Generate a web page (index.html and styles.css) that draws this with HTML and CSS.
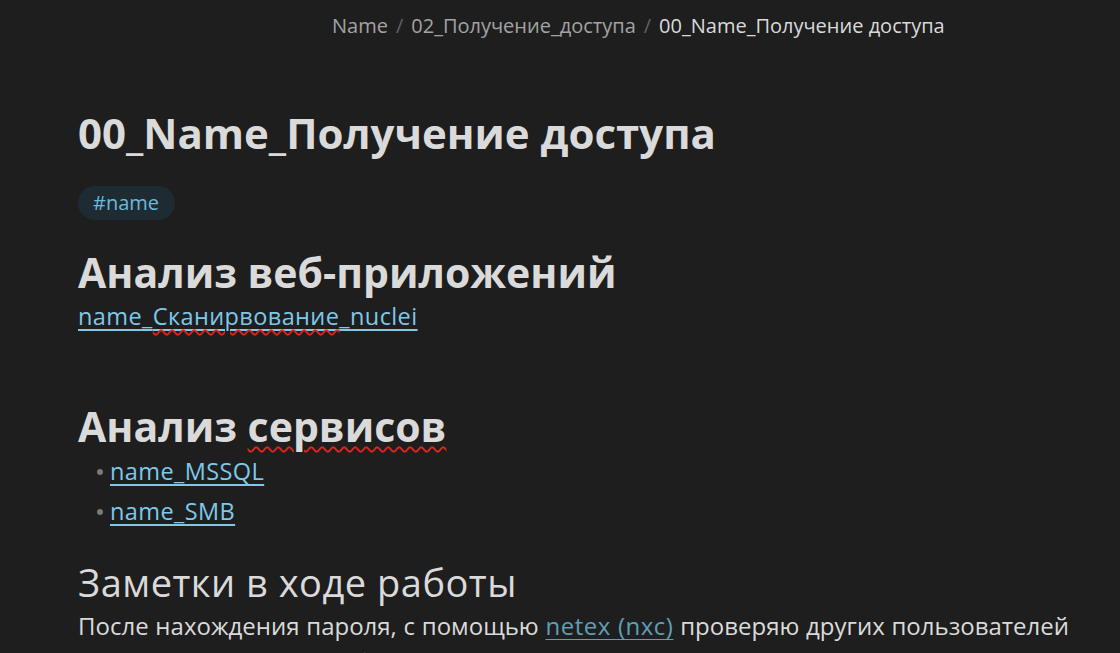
FILE: index.html
```html
<!DOCTYPE html>
<html lang="ru">
<head>
<meta charset="utf-8">
<title>00_Name_Получение доступа</title>
<link rel="stylesheet" href="styles.css">
</head>
<body>
<div class="app">
  <nav class="crumbs">
    <span class="crumb">Name</span>
    <span class="sep">/</span>
    <span class="crumb">02_Получение_доступа</span>
    <span class="sep">/</span>
    <span class="crumb current">00_Name_Получение доступа</span>
  </nav>
  <main class="note">
    <h1 class="title">00_Name_Получение доступа</h1>
    <div class="tags"><span class="tag">#name</span></div>
    <h2 class="h2">Анализ веб-приложений</h2>
    <p class="line"><a class="ilink" href="#">name_<span class="spell">Сканирвование</span>_nuclei</a></p>
    <h2 class="h2 second">Анализ <span class="spell">сервисов</span></h2>
    <ul class="list">
      <li><a class="ilink" href="#">name_MSSQL</a></li>
      <li><a class="ilink" href="#">name_SMB</a></li>
    </ul>
    <h3 class="h3">Заметки в ходе работы</h3>
    <p class="para">После нахождения пароля, с помощью <a class="elink" href="#">netex (nxc)</a> проверяю других пользователей на наличие доступа к общим ресурсам и сервисам</p>
  </main>
</div>
</body>
</html>
```
FILE: styles.css
```css
html, body {
  margin: 0;
  padding: 0;
  background: #1e1e1e;
  height: 100%;
  overflow: hidden;
}
.app {
  font-family: "Open Sans", "Noto Sans", sans-serif;
  color: #dadada;
}
.crumbs {
  display: flex;
  align-items: center;
  gap: 8px;
  padding: 12px 0 0 332px;
  font-size: 20px;
  line-height: 28px;
  color: #a3a3a3;
  white-space: nowrap;
}
.crumbs .sep { color: #616161; }
.crumbs .current { color: #dadada; }
.note {
  padding: 0 0 0 78px;
  width: 1000px;
}
.title {
  margin: 68px 0 0;
  font-size: 42px;
  line-height: 50px;
  font-weight: 700;
  color: #dadada;
}
.tags {
  margin-top: 28px;
  display: flex;
}
.tag {
  background: #1f2b33;
  color: #6cb9dd;
  font-size: 20px;
  line-height: 34px;
  padding: 0 16px 0 15px;
  border-radius: 17px;
}
.h2 {
  margin: 28px 0 0;
  font-size: 41px;
  line-height: 48px;
  font-weight: 700;
}
.h2.second { margin-top: 70px; }
.line, .para {
  margin: 0;
  font-size: 23.5px;
  line-height: 32px;
}
.line { margin-top: 4px; }
.ilink {
  color: #7ec8ea;
  letter-spacing: 0.4px;
  text-decoration: underline;
  text-decoration-thickness: 2px;
  text-underline-offset: 4px;
}
.spell {
  text-decoration: underline wavy #e0241c;
  text-decoration-thickness: 1.5px;
  text-underline-offset: 4px;
}
.list {
  margin: 1px 0 0;
  padding: 0 0 0 32px;
  list-style: none;
}
.list li {
  position: relative;
  font-size: 23.5px;
  line-height: 40px;
}
.list li::before {
  content: "";
  position: absolute;
  left: -13px;
  top: 18px;
  width: 6px;
  height: 6px;
  border-radius: 50%;
  background: #7a7a7a;
}
.h3 {
  margin: 29px 0 0;
  font-size: 38px;
  line-height: 44px;
  font-weight: 500;
  letter-spacing: 0.5px;
}
.para {
  margin-top: 4px;
  width: 1000px;
  font-size: 24px;
  line-height: 36px;
  word-spacing: 0.5px;
}
.elink {
  color: #5d9fb7;
  letter-spacing: 0.5px;
  text-decoration: underline;
  text-decoration-thickness: 1px;
  text-underline-offset: 4px;
}
```
